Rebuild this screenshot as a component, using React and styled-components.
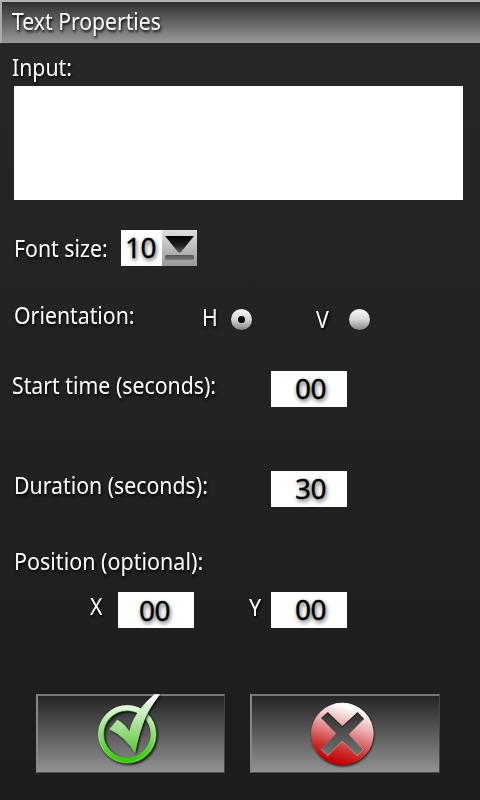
import React, { useState } from "react";
import styled, { createGlobalStyle } from "styled-components";

const GlobalStyle = createGlobalStyle`
  * { box-sizing: border-box; }
  body { margin: 0; background: #1e1e1e; }
`;

const Screen = styled.main`
  width: 480px;
  height: 800px;
  overflow: hidden;
  background: linear-gradient(#292929 0, #262626 90px, #1e1e1e 720px, #1d1d1d 800px);
  color: #fff;
  font-family: "Noto Sans", "Open Sans", sans-serif;
  font-size: 23px;
  line-height: 30px;
`;

const Header = styled.header`
  height: 43px;
  padding: 4px 0 0 10px;
  background: linear-gradient(#303030, #999);
  background-clip: padding-box;
  border-top: 2px solid #b2b2b2;
  border-left: 2px solid #aaa;
`;

const Label = styled.span`
  display: block;
  width: max-content;
  height: 30px;
  margin-top: ${(p) => p.$drop || 0}px;
  white-space: nowrap;
  font-size: 23px;
  font-weight: 400;
  text-shadow: 1px 2px 3px #000;
  transform: scaleX(${(p) => p.$squeeze || 0.925});
  transform-origin: left;
`;

const Row = styled.div`
  display: grid;
  grid-template-columns: ${(p) => p.$columns};
  align-items: start;
  height: ${(p) => p.$height}px;
  padding-left: ${(p) => p.$inset}px;
`;

const InputArea = styled.textarea`
  display: block;
  width: 449px;
  height: 114px;
  margin: 0 0 30px 14px;
  padding: 6px;
  border: 0;
  outline: 0;
  resize: none;
  background: #fff;
  color: #000;
  font: inherit;
`;

const NumberBox = styled.div`
  display: flex;
  width: ${(p) => p.$width || 76}px;
  height: 36px;
  margin-top: ${(p) => p.$drop || 0}px;
  padding-top: ${(p) => p.$top || 0}px;
  padding-left: ${(p) => p.$inset}px;
  background: #fff;
`;

const Digits = styled.span`
  display: block;
  color: #000;
  font-size: 28px;
  font-weight: 400;
  line-height: ${(p) => p.$line || 36}px;
  letter-spacing: -0.6px;
  -webkit-text-stroke: 0.3px #000;
  text-shadow: 1px 2px 4px rgba(0, 0, 0, 0.75);
`;

const SizePicker = styled.div`
  display: flex;
`;

const DropButton = styled.button`
  width: 35px;
  height: 36px;
  padding: 0;
  border: 0;
  background: linear-gradient(#dedede, #999);
  svg { display: block; }
`;

const Radio = styled.button`
  display: grid;
  place-items: center;
  width: 21px;
  height: 21px;
  margin-top: ${(p) => p.$drop}px;
  padding: 0;
  border: 0;
  border-radius: 50%;
  background: linear-gradient(#fafafa, #d5d5d5 50%, #858585);
`;

const Dot = styled.span`
  width: 7px;
  height: 7px;
  border-radius: 50%;
  background: #000;
`;

const Actions = styled.footer`
  display: flex;
  gap: 25px;
  padding-left: 36px;
`;

const ActionButton = styled.button`
  width: ${(p) => p.$width}px;
  height: 79px;
  padding: 0;
  background: linear-gradient(#252525, #929292);
  border: solid;
  border-width: 2px 1px 1px 2px;
  border-color: #777 #444 #4c4c4c #888;
  svg { display: block; margin: -2px 0 0 -2px; overflow: visible; }
`;

function DropIcon() {
  return (
    <svg width="35" height="36" viewBox="0 0 35 36">
      <defs>
        <linearGradient id="arrow" x1="0" y1="0" x2="0" y2="1">
          <stop offset="0" stopColor="#000" />
          <stop offset=".55" stopColor="#1c1c1c" />
          <stop offset="1" stopColor="#666" />
        </linearGradient>
        <linearGradient id="bar" x1="0" y1="0" x2="0" y2="1">
          <stop offset="0" stopColor="#555" />
          <stop offset="1" stopColor="#777" />
        </linearGradient>
      </defs>
      <path d="M3 6H32L19 22Q17.5 23.8 16 22Z" fill="url(#arrow)" />
      <rect x="3" y="25" width="29" height="5" rx="1.8" fill="url(#bar)" />
    </svg>
  );
}

function AcceptIcon() {
  return (
    <svg width="189" height="79" viewBox="0 0 189 79">
      <defs>
        <linearGradient id="ring" gradientUnits="userSpaceOnUse" x1="0" y1="12" x2="0" y2="70">
          <stop offset="0" stopColor="#e9f8e4" />
          <stop offset=".4" stopColor="#9edc88" />
          <stop offset="1" stopColor="#2fc400" />
        </linearGradient>
        <linearGradient id="tick" gradientUnits="userSpaceOnUse" x1="0" y1="0" x2="0" y2="60">
          <stop offset="0" stopColor="#fff" />
          <stop offset=".3" stopColor="#cdeec2" />
          <stop offset=".65" stopColor="#93d97b" />
          <stop offset="1" stopColor="#52c72c" />
        </linearGradient>
        <filter id="greenShade" x="-30%" y="-30%" width="160%" height="160%">
          <feDropShadow dx="1.2" dy="1.3" stdDeviation="1.1" floodColor="#000" floodOpacity=".9" />
        </filter>
      </defs>
      <g filter="url(#greenShade)">
        <circle cx="91.4" cy="40.4" r="26.2" fill="none" stroke="#248c08" strokeWidth="5.8" />
        <circle cx="91.1" cy="40" r="26.2" fill="none" stroke="url(#ring)" strokeWidth="5.2" />
        <circle cx="91" cy="40" r="28.4" fill="none" stroke="#fff" strokeOpacity=".3" strokeWidth="1" />
      </g>
      <path
        d="M73.3 35.3L81.3 25.7Q88.5 29.5 93.3 37.5Q96.5 24 105 14Q111.5 6 118.5 .3H124Q115 12 109.7 22.7Q103.5 37 99 59.5Q90 43 73.3 35.3Z"
        fill="url(#tick)"
        filter="url(#greenShade)"
      />
    </svg>
  );
}

function CancelIcon() {
  return (
    <svg width="190" height="79" viewBox="0 0 190 79">
      <defs>
        <linearGradient id="disc" x1=".65" y1="0" x2=".35" y2="1">
          <stop offset=".08" stopColor="#fff" />
          <stop offset=".4" stopColor="#e7a0a0" />
          <stop offset=".72" stopColor="#cf3434" />
          <stop offset=".95" stopColor="#bd0000" />
        </linearGradient>
        <linearGradient id="cut" x1="0" y1="0" x2="0" y2="1">
          <stop offset="0" stopColor="#333" />
          <stop offset="1" stopColor="#727272" />
        </linearGradient>
        <filter id="redShade" x="-30%" y="-30%" width="160%" height="160%">
          <feDropShadow dx="0.6" dy="1.2" stdDeviation="1.2" floodColor="#000" floodOpacity=".9" />
        </filter>
      </defs>
      <circle cx="92.3" cy="40" r="31.2" fill="url(#disc)" filter="url(#redShade)" />
      <path
        d="M71.5 24.5L77.8 18.8L92.3 33L107.5 19L113.5 25.2L98.8 40L113.5 55.5L107.2 61.8L92.3 47L77.8 61.8L71 55.5L86 40Z"
        fill="url(#cut)"
        stroke="#e9a5a5"
        strokeWidth=".6"
      />
      <path d="M71.5 24.5L77.8 18.8L92.3 33L107.5 19L113.5 25.2" fill="none" stroke="#3a2020" strokeWidth="1.3" />
      <path d="M86 40L71.3 55.3M98.8 40L113.2 25.4" fill="none" stroke="#3a2020" strokeOpacity=".5" />
    </svg>
  );
}

export default function App() {
  const [orientation, setOrientation] = useState("H");
  return (
    <>
      <GlobalStyle />
      <Screen>
        <Header>
          <Label as="h1" $squeeze={0.92}>Text Properties</Label>
        </Header>
        <Row $columns="auto" $height={43} $inset={12}>
          <Label $drop={9}>Input:</Label>
        </Row>
        <InputArea aria-label="Input" />
        <Row $columns="107px auto" $height={70} $inset={14}>
          <Label $drop={3}>Font size:</Label>
          <SizePicker>
            <NumberBox $width={41} $inset={4}>
              <Digits $line={34}>10</Digits>
            </NumberBox>
            <DropButton aria-label="Choose font size">
              <DropIcon />
            </DropButton>
          </SizePicker>
        </Row>
        <Row $columns="188px 29px 85px 33px auto" $height={70} $inset={14}>
          <Label>Orientation:</Label>
          <Label $drop={2}>H</Label>
          <Radio $drop={9} aria-label="Horizontal" onClick={() => setOrientation("H")}>
            {orientation === "H" && <Dot />}
          </Radio>
          <Label $drop={4}>V</Label>
          <Radio $drop={9} aria-label="Vertical" onClick={() => setOrientation("V")}>
            {orientation === "V" && <Dot />}
          </Radio>
        </Row>
        <Row $columns="259px auto" $height={100} $inset={12}>
          <Label>Start time (seconds):</Label>
          <NumberBox $drop={1} $inset={24}>
            <Digits $line={34}>00</Digits>
          </NumberBox>
        </Row>
        <Row $columns="257px auto" $height={76} $inset={14}>
          <Label>Duration (seconds):</Label>
          <NumberBox $drop={1} $inset={24}>
            <Digits $line={34}>30</Digits>
          </NumberBox>
        </Row>
        <Row $columns="auto" $height={45} $inset={14}>
          <Label $squeeze={0.935}>Position (optional):</Label>
        </Row>
        <Row $columns="28px 131px 22px auto" $height={103} $inset={90}>
          <Label>X</Label>
          <NumberBox $drop={1} $inset={21}>
            <Digits>00</Digits>
          </NumberBox>
          <Label $drop={1}>Y</Label>
          <NumberBox $drop={1} $inset={24}>
            <Digits $line={34}>00</Digits>
          </NumberBox>
        </Row>
        <Actions>
          <ActionButton $width={189} aria-label="Accept">
            <AcceptIcon />
          </ActionButton>
          <ActionButton $width={190} aria-label="Cancel">
            <CancelIcon />
          </ActionButton>
        </Actions>
      </Screen>
    </>
  );
}
